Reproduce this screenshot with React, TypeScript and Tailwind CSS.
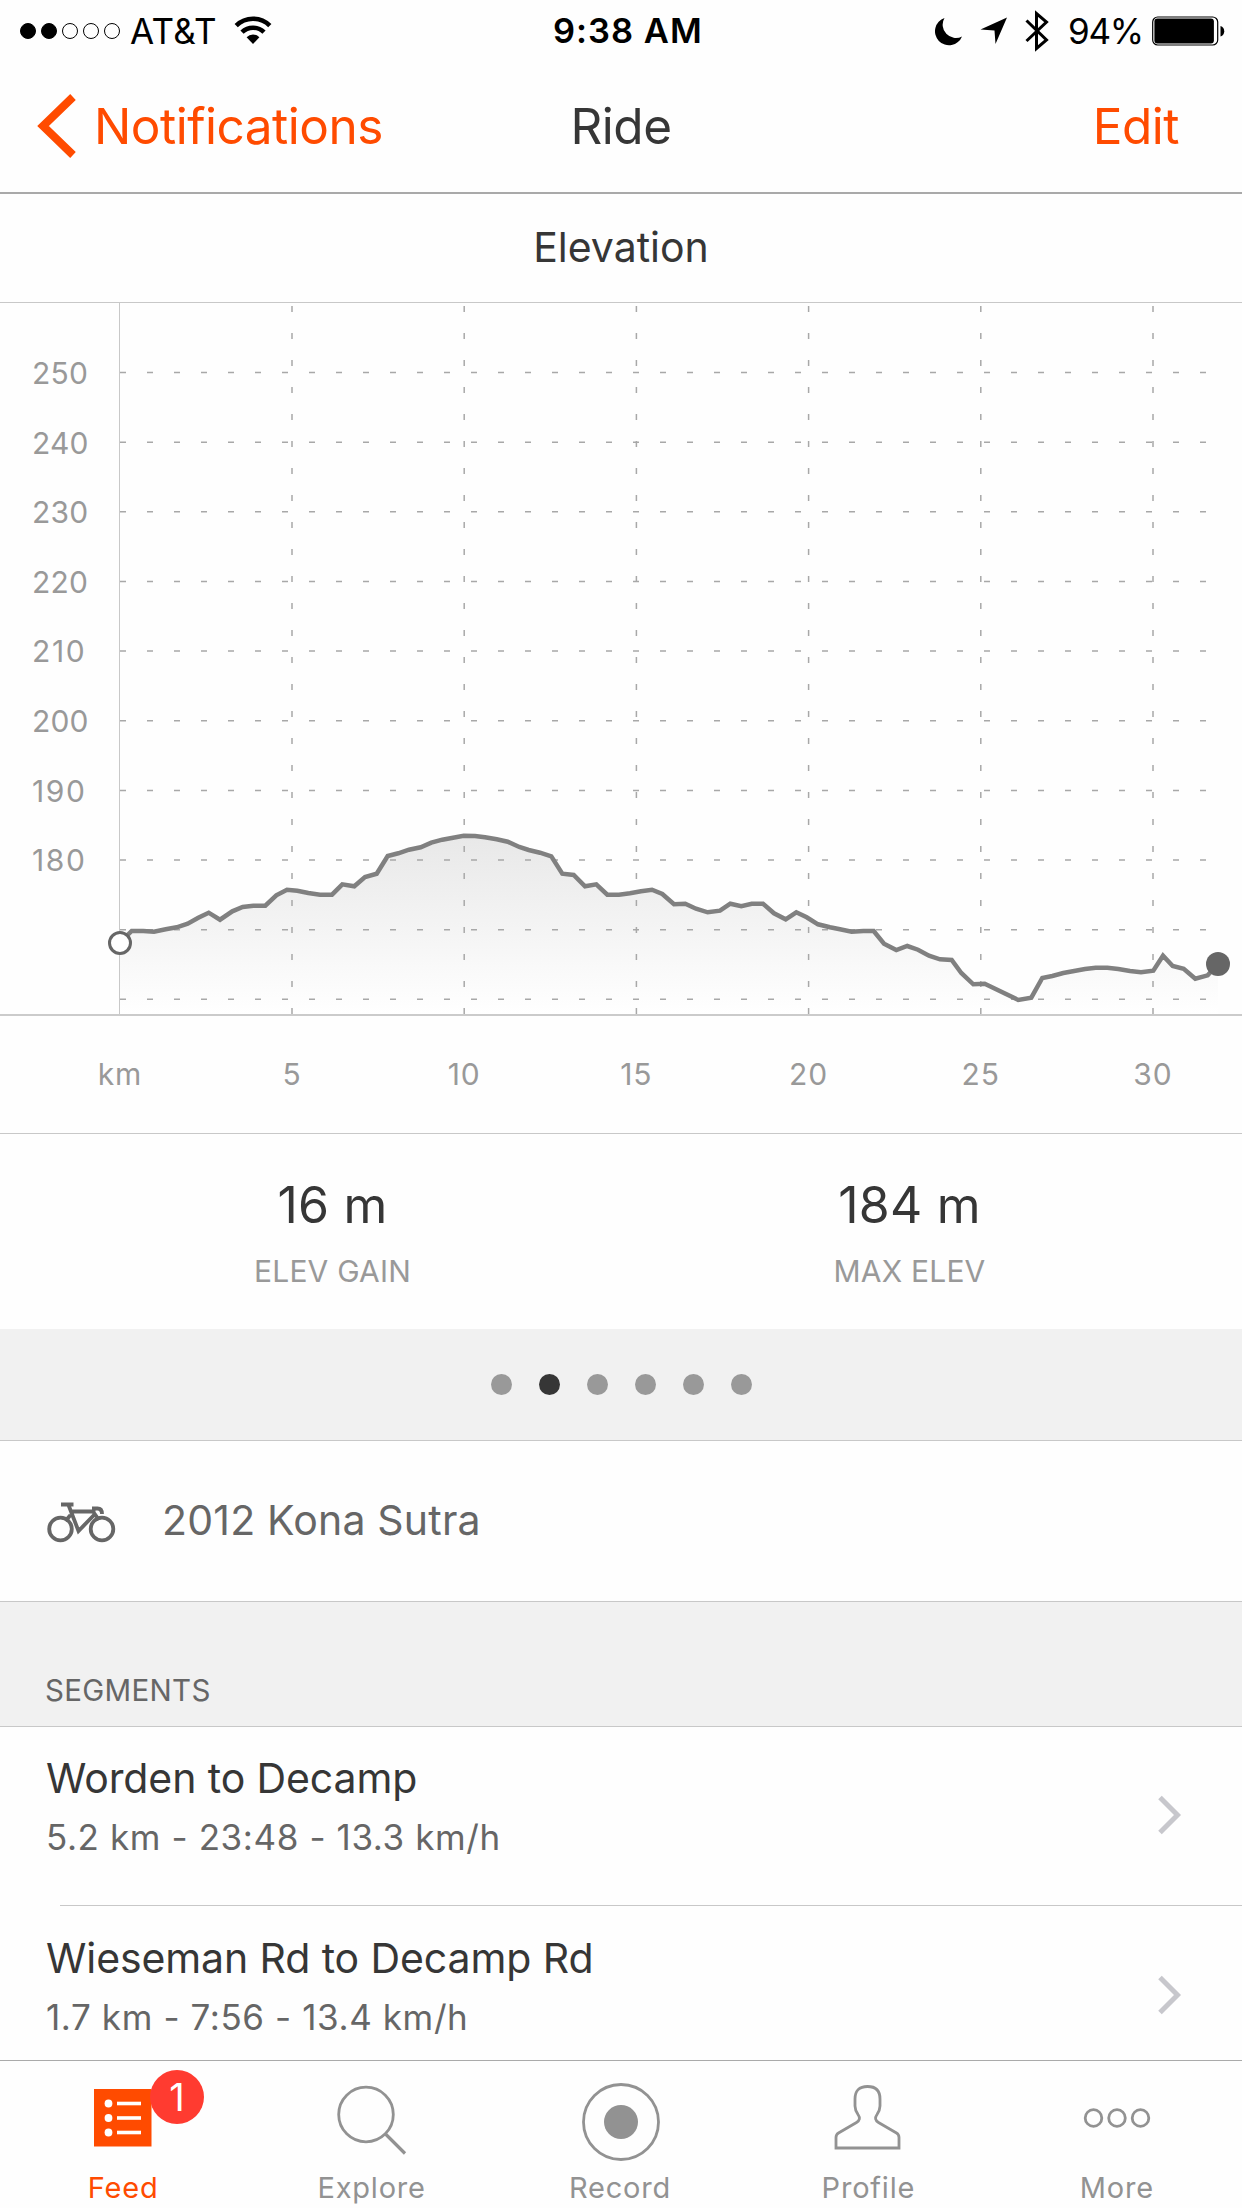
import { ReactNode } from "react";

const yTicks = [250, 240, 230, 220, 210, 200, 190, 180, 170, 160];
const xTicks = [5, 10, 15, 20, 25, 30];

// chart space: x 0..1242, y 303..1133
const profile: [number, number][] = [
  [119.5, 943], [131.7, 931], [143.3, 931], [154, 931.7], [165.7, 929.3],
  [176.7, 927.3], [187.7, 923.7], [198.3, 917.7], [208.7, 912.7], [220, 919.7],
  [232.3, 911.3], [242.7, 907], [253.3, 905.7], [265.3, 905.7], [276.3, 895.3],
  [287, 889.7], [297.3, 890.7], [308.3, 893], [320, 894.7], [332, 894.7],
  [342.3, 884.3], [354.3, 886.3], [365, 877], [376.7, 873.7], [387.7, 856],
  [398.3, 853.3], [409, 849.7], [420.7, 847.3], [431.3, 842.7], [442.3, 839.7],
  [463.7, 835.7], [475, 836], [485, 837.3], [496.7, 839.3], [507.7, 841.7],
  [519.3, 847], [528.7, 850], [540, 852.7], [551.3, 856.3], [562.3, 873.7],
  [573.7, 875], [585, 886.3], [596.3, 884.3], [607.3, 894.7], [619, 894.7],
  [630, 893.3], [641, 891.3], [652, 889.7], [662.3, 894], [674, 904.3],
  [685.3, 903.7], [696, 908.7], [707.7, 912.3], [720, 910.7], [730.3, 903.7],
  [741.3, 906.3], [751.7, 903.7], [763, 903.7], [774, 913.3], [785.7, 919.3],
  [796.3, 912.3], [806.7, 917.3], [818, 924.3], [830, 927.3], [840, 929.3],
  [851.7, 931.7], [863.3, 931], [873.7, 931], [884, 943.7], [896.3, 950],
  [907.3, 946], [918, 949.7], [929, 955.7], [940, 959.3], [951.7, 960],
  [961.3, 973], [973.3, 984.3], [984.7, 983.7], [1018.3, 1000], [1031.3, 997.7],
  [1042.3, 978], [1052.3, 976], [1063.3, 973], [1085, 969], [1095.7, 967.7],
  [1107.3, 967.7], [1118.3, 969], [1130, 971], [1141, 972.3], [1153.3, 970.7],
  [1163, 955.7], [1172.7, 966], [1183.7, 968.7], [1195.3, 978.7], [1207.7, 975.3],
  [1218, 964],
];

const segments = [
  { name: "Worden to Decamp", stats: "5.2 km - 23:48 - 13.3 km/h" },
  { name: "Wieseman Rd to Decamp Rd", stats: "1.7 km - 7:56 - 13.4 km/h" },
];

const StatusBar = () => (
  <div className="flex h-[62px] items-center pr-[17px] pl-5 whitespace-nowrap text-black">
    <div className="flex w-[533px] shrink-0 items-center">
      <div className="flex gap-[5px]">
        {[1, 1, 0, 0, 0].map((on, i) => (
          <div
            key={i}
            className={`size-4 rounded-full border border-black ${on ? "bg-black" : ""}`}
          />
        ))}
      </div>
      <span className="ml-2.5 text-[35px] tracking-[0.3px]">AT&amp;T</span>
      <svg className="ml-[17px] -mt-0.5" width="38" height="30" viewBox="0 0 38 30">
        <g fill="none" stroke="#000" strokeWidth="4.6">
          <path d="M2.2 10.6a24 24 0 0 1 33.6 0" />
          <path d="M8 17.2a15.8 15.8 0 0 1 22 0" />
        </g>
        <path d="M12.6 22.2a9 9 0 0 1 12.8 0L19 29z" />
      </svg>
    </div>
    <span className="text-[34.5px] font-semibold tracking-[1px]">9:38 AM</span>
    <div className="flex flex-1 items-center justify-end">
      <svg width="29" height="29" viewBox="0 0 29 29">
        <path d="M10.5 1A14 14 0 1 0 28 19.4 13.2 13.2 0 0 1 10.5 1z" />
      </svg>
      <svg className="ml-[17px]" width="28" height="28" viewBox="0 0 28 28">
        <path d="M27 0.5 15.5 27 14.5 13.5 0.5 12.5z" />
      </svg>
      <svg className="ml-[16px]" width="26" height="42" viewBox="0 0 26 42">
        <path
          d="M2.5 10.5 22.5 30 12.5 38.5V3.5l10 8.5L2.5 31"
          fill="none"
          stroke="#000"
          strokeWidth="3"
        />
      </svg>
      <span className="ml-[18px] text-[35px] tracking-[-1.2px]">94%</span>
      <svg className="ml-[9px]" width="73" height="30" viewBox="0 0 73 30">
        <rect x="0.7" y="1" width="65" height="28" rx="5" fill="none" stroke="#000" strokeWidth="1.2" />
        <rect x="2.4" y="2.6" width="59.5" height="24.8" rx="3" />
        <path d="M68.5 10c5 1 5 9.5 0 10.5z" />
      </svg>
    </div>
  </div>
);

const NavBar = () => (
  <div className="flex h-[132px] items-center justify-between border-b-2 border-[#a9a9a9] pr-[63px] pb-[2px] pl-9 text-[49.5px] tracking-[-0.5px] text-[#ff4b00]">
    <div className="flex w-[400px] items-center">
      <svg width="41" height="64" viewBox="0 0 41 64">
        <path d="M37 3 7 32l30 29" fill="none" stroke="currentColor" strokeWidth="8" />
      </svg>
      <span className="ml-[17px]">Notifications</span>
    </div>
    <span className="text-[#363636]">Ride</span>
    <span className="w-[373px] text-right">Edit</span>
  </div>
);

const ElevationChart = () => {
  const points = profile.map((p) => p.join(",")).join(" ");

  return (
    <svg width="1242" height="830" viewBox="0 303 1242 830" className="block">
      <defs>
        <linearGradient id="area" x1="0" y1="0" x2="0" y2="1">
          <stop offset="0" stopColor="#e8e8e8" />
          <stop offset="1" stopColor="#ffffff" />
        </linearGradient>
      </defs>
      <polygon points={`119.5,1014 ${points} 1218,1014`} fill="url(#area)" />
      <g stroke="#a8a8a8" strokeWidth="1.5" strokeDasharray="6 21">
        {yTicks.map((t, i) => (
          <line key={t} x1="120" x2="1208" y1={372.5 + i * 69.65} y2={372.5 + i * 69.65} />
        ))}
        {xTicks.map((t, i) => (
          <line key={t} y1="306" y2="1014" x1={292 + i * 172.2} x2={292 + i * 172.2} />
        ))}
      </g>
      <line x1="119.5" x2="119.5" y1="303" y2="1014" stroke="#c8c8c8" />
      <line x1="0" x2="1242" y1="1015" y2="1015" stroke="#cbcbcb" strokeWidth="2" />
      <polyline points={points} fill="none" stroke="#808080" strokeWidth="4.5" />
      <circle cx="120" cy="943" r="10.5" fill="#fff" stroke="#666" strokeWidth="3" />
      <circle cx="1218" cy="964" r="12" fill="#666" />
      <g fill="#999" fontSize="30">
        {yTicks.slice(0, 8).map((t, i) => (
          <text key={t} x="32" y={384 + i * 69.6} letterSpacing={String(t).includes("1") ? 1.6 : 0.2}>
            {t}
          </text>
        ))}
        <g textAnchor="middle" letterSpacing="1">
          <text x="120" y="1085">km</text>
          {xTicks.map((t, i) => (
            <text key={t} x={292 + i * 172.2} y="1085">
              {t}
            </text>
          ))}
        </g>
      </g>
    </svg>
  );
};

const Stat = ({ value, label }: { value: string; label: string }) => (
  <div className="flex flex-1 flex-col items-center">
    <span className="text-[50px] leading-[60px] tracking-[0.2px] text-[#363636]">{value}</span>
    <span className="mt-4 text-[30px] leading-[40px] tracking-[0.2px] text-[#999]">{label}</span>
  </div>
);

const BikeIcon = () => (
  <svg className="mt-[3px] ml-px" width="70" height="42" viewBox="0 0 70 42" fill="none" stroke="#666" strokeWidth="3.8">
    <circle cx="13.5" cy="27" r="11.3" />
    <circle cx="55" cy="27" r="11.3" />
    <path d="M14 2.5h12.5M21.5 3l10 26L47 13M23.5 9.5h25M23.5 13l-5 6M46 9.5l6 8.5M45 6.5h5.5q4.5 0 4.5 5.500" />
  </svg>
);

const SegmentRow = ({ name, stats }: { name: string; stats: string }) => (
  <div className="h-[180px] shrink-0">
    <div className="flex h-[179px] items-start justify-between pr-[58px] pl-[46px]">
      <div className="flex flex-col pt-[22px]">
        <span className="text-[41px] leading-[60px] tracking-[-0.1px] text-[#363636]">{name}</span>
        <span className="mt-px text-[35px] leading-[56px] tracking-[0.6px] text-[#666]">{stats}</span>
      </div>
      <svg className="mt-[68px]" width="27" height="42" viewBox="0 0 27 42">
        <path d="M3 3.5 20.5 21 3 38.5" fill="none" stroke="#c7c7cc" strokeWidth="5" />
      </svg>
    </div>
    <div className="ml-[60px] h-px bg-[#c8c8c8]" />
  </div>
);

const Tab = ({ label, active, children }: { label: string; active?: boolean; children: ReactNode }) => (
  <div
    className={`relative flex flex-1 flex-col items-center pt-[21px] ${active ? "text-[#ff4b00]" : "text-[#929292]"}`}
  >
    <svg width="80" height="80" viewBox="0 0 80 80" fill="none" stroke="currentColor" strokeWidth="2.8">
      {children}
    </svg>
    <span className="mt-[7px] pr-[2px] text-[29px] leading-[38px] tracking-[0.8px]">{label}</span>
    {active && (
      <div className="absolute top-[9px] left-[150px] flex size-[54px] items-center justify-center rounded-full bg-[#ff3b30] text-[38px] text-white">
        1
      </div>
    )}
  </div>
);

export default function App() {
  return (
    <div className="flex h-[2208px] w-[1242px] flex-col overflow-hidden bg-[#fefefe] font-['Inter',sans-serif]">
      <StatusBar />
      <NavBar />
      <div className="flex h-[109px] items-center justify-center border-b border-[#c8c8c8] text-[41px] text-[#363636]">
        Elevation
      </div>
      <ElevationChart />

      <div className="flex h-[196px] shrink-0 border-t border-[#c8c8c8] px-11 pt-[41px]">
        <Stat value="16 m" label="ELEV GAIN" />
        <Stat value="184 m" label="MAX ELEV" />
      </div>

      <div className="flex h-28 shrink-0 items-center justify-center gap-[27px] border-b border-[#c8c8c8] bg-[#f1f1f1]">
        {[0, 1, 2, 3, 4, 5].map((i) => (
          <div key={i} className={`size-[21px] rounded-full ${i === 1 ? "bg-[#363636]" : "bg-[#999]"}`} />
        ))}
      </div>

      <div className="flex h-[161px] shrink-0 items-center border-b border-[#c8c8c8] pl-[46px]">
        <BikeIcon />
        <span className="ml-[45px] text-[41px] tracking-[0.2px] text-[#666]">2012 Kona Sutra</span>
      </div>

      <div className="flex h-[125px] shrink-0 items-end border-b border-[#c8c8c8] bg-[#f1f1f1] pb-4 pl-[45px] text-[29.5px] leading-[40px] tracking-[0.3px] text-[#666]">
        SEGMENTS
      </div>

      <div className="-mt-px flex min-h-0 flex-1 flex-col overflow-hidden">
        {segments.map((s) => (
          <SegmentRow key={s.name} {...s} />
        ))}
      </div>

      <div className="flex h-[148px] shrink-0 border-t border-[#aaa]">
        <Tab label="Feed" active>
          <rect x="10" y="7" width="57.5" height="57.5" fill="currentColor" stroke="none" />
          <g fill="#fff" stroke="none">
            {[21.5, 36, 50.5].map((y) => (
              <g key={y}>
                <circle cx="24.5" cy={y} r="3.9" />
                <rect x="33" y={y - 1.8} width="24" height="3.6" />
              </g>
            ))}
          </g>
        </Tab>
        <Tab label="Explore">
          <circle cx="33" cy="32.5" r="27.3" />
          <path d="M52.500 52l19.500 19.500" strokeWidth="3.2" />
        </Tab>
        <Tab label="Record">
          <circle cx="40" cy="40" r="37.5" />
          <circle cx="40" cy="40" r="17" fill="currentColor" stroke="none" />
        </Tab>
        <Tab label="Profile">
          <path d="M7 66V55.5q0-3 2.5-4.5l18-10.5q5-3 1.500-8Q26 28 26 24V17q0-12.500 12.500-12.500T51 17v7q0 4-3 8.500-3.500 5 1.500 8L67.500 51q2.500 1.500 2.500 4.500V66z" />
        </Tab>
        <Tab label="More">
          <circle cx="15.5" cy="36" r="8.3" />
          <circle cx="39" cy="36" r="8.3" />
          <circle cx="62.5" cy="36" r="8.3" />
        </Tab>
      </div>
    </div>
  );
}
